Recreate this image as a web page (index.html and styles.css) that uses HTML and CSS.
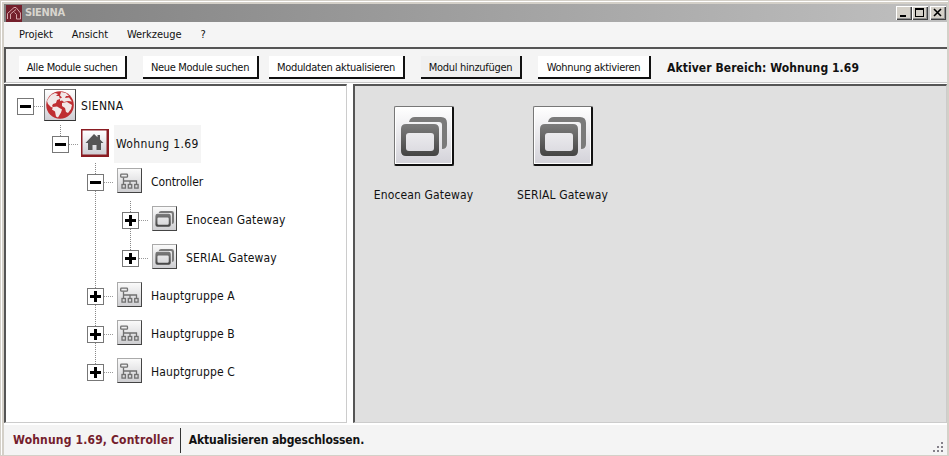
FILE: index.html
```html
<!DOCTYPE html>
<html lang="de">
<head>
<meta charset="utf-8">
<title>SIENNA</title>
<link rel="stylesheet" href="styles.css">
</head>
<body>
<svg class="defs" aria-hidden="true">
  <defs>
    <linearGradient id="tile" x1="0" y1="0" x2="0" y2="1"><stop offset="0" stop-color="#fff"/><stop offset="1" stop-color="#cfced4"/></linearGradient>
    <linearGradient id="ink" x1="0" y1="0" x2="0" y2="1"><stop offset="0" stop-color="#7c7c7c"/><stop offset="1" stop-color="#444"/></linearGradient>
    <symbol id="group" viewBox="0 0 23 23">
      <g fill="none" stroke="#707070" stroke-width="1.300">
        <rect x="2.700" y="5.200" width="6.800" height="3" rx=".8"/>
        <path d="M6 8.500V12h13.500M6 11.500v4M12.500 11.500v4M19 11.500v4" transform="translate(-.5)"/>
        <rect x="4" y="15.500" width="3.400" height="3.600"/><rect x="10.300" y="15.500" width="3.400" height="3.600"/><rect x="16.700" y="15.500" width="3.400" height="3.600"/>
      </g>
    </symbol>
    <symbol id="gateway" viewBox="0 0 57 57">
      <path fill="#7a7a7a" d="M14 15q1-5 6-5h26q6 0 6 6v21q0 5-5 5V18q0-3-3-3z"/>
      <path fill="url(#ink)" fill-rule="evenodd" d="M11 17h28q5 0 5 5v22q0 5-5 5H11q-5 0-5-5V22q0-5 5-5zM14 26q-3 0-3 3v12q0 3 3 3h22q3 0 3-3V29q0-3-3-3z"/>
    </symbol>
  </defs>
</svg>
<div class="window">
  <header class="titlebar">
    <svg class="logo" viewBox="0 0 16 17"><rect width="16" height="17" fill="#74202c"/><path d="M1.500 14V8.500L8 2.500h2L14.500 8v6H10.500V9.500L8.500 7.500M4.500 14V9L10 4.500" fill="none" stroke="#dfb4b8" stroke-width=".9"/></svg>
    <span class="title">SIENNA</span>
    <span class="ctl"><svg viewBox="0 0 16 14"><path d="M4 9h6v2H4z"/></svg></span>
    <span class="ctl"><svg viewBox="0 0 16 14"><path fill-rule="evenodd" d="M3 2h9v9H3zM4 4v6h7V4z"/></svg></span>
    <span class="ctl close"><svg viewBox="0 0 16 14"><path d="M4 3l7 7M11 3l-7 7" stroke="#000" stroke-width="1.600"/></svg></span>
  </header>
  <nav class="menu"><span>Projekt</span><span>Ansicht</span><span>Werkzeuge</span><span>?</span></nav>
  <div class="toolbar">
    <button class="b1">Alle Module suchen</button>
    <button class="b2">Neue Module suchen</button>
    <button class="b3">Moduldaten aktualisieren</button>
    <button class="b4">Modul hinzufügen</button>
    <button class="b5">Wohnung aktivieren</button>
    <strong>Aktiver Bereich: Wohnung 1.69</strong>
  </div>
  <main class="content">
    <section class="tree">
      <div class="row"><i class="cell"><b class="box"></b></i>
        <span class="slot"><svg class="globe" viewBox="0 0 30 30"><rect width="30" height="30" fill="url(#tile)"/><circle cx="15" cy="15" r="13.800" fill="#bf2e32"/><path fill="#f1e8e8" d="M3 9L6 5l4-2 3 1-2 2 3 0 1 3-3 1-1 3-3 1-1 2 2 2-3-1-3-3-1-3zM8 17l4-.5 5 3-1 3-3 5-2-1-1-5-3-2zM16 2l5 1 3 3-3 0-1 2 4-.5 3 4-4-.5-4 1-2-1.500-2 .5 0-2.500 2-1-2-2zM17 13l5-1 5 3-1 4-3 4-2-1-1-4-3-2z"/></svg></span><span class="label l0">SIENNA</span></div>
      <div class="row"><i class="cell blank"></i><i class="cell last"><b class="box"></b></i>
        <span class="slot"><svg class="home" viewBox="0 0 28 28"><rect width="28" height="28" fill="#8a1c22"/><rect x="1.500" y="1.500" width="24" height="24" fill="url(#tile)"/><path fill="#555" d="M13 5l3.500 3.200V6h2.500v4.500L22.500 14H20v7h-4.500v-5h-4v5H7v-7H4.500z"/></svg></span><span class="label selected">Wohnung 1.69</span></div>
      <div class="row"><i class="cell blank"></i><i class="cell blank"></i><i class="cell mid"><b class="box"></b></i>
        <span class="slot"><svg class="small"><use href="#group"/></svg></span><span class="label l2">Controller</span></div>
      <div class="row"><i class="cell blank"></i><i class="cell blank"></i><i class="cell line"></i><i class="cell mid"><b class="box plus"></b></i>
        <span class="slot"><svg class="small"><use href="#gateway"/></svg></span><span class="label">Enocean Gateway</span></div>
      <div class="row"><i class="cell blank"></i><i class="cell blank"></i><i class="cell line"></i><i class="cell last"><b class="box plus"></b></i>
        <span class="slot"><svg class="small"><use href="#gateway"/></svg></span><span class="label">SERIAL Gateway</span></div>
      <div class="row"><i class="cell blank"></i><i class="cell blank"></i><i class="cell mid"><b class="box plus"></b></i>
        <span class="slot"><svg class="small"><use href="#group"/></svg></span><span class="label">Hauptgruppe A</span></div>
      <div class="row"><i class="cell blank"></i><i class="cell blank"></i><i class="cell mid"><b class="box plus"></b></i>
        <span class="slot"><svg class="small"><use href="#group"/></svg></span><span class="label">Hauptgruppe B</span></div>
      <div class="row"><i class="cell blank"></i><i class="cell blank"></i><i class="cell last"><b class="box plus"></b></i>
        <span class="slot"><svg class="small"><use href="#group"/></svg></span><span class="label">Hauptgruppe C</span></div>
    </section>
    <section class="modules">
      <figure><svg class="big"><use href="#gateway"/></svg><figcaption>Enocean Gateway</figcaption></figure>
      <figure><svg class="big"><use href="#gateway"/></svg><figcaption>SERIAL Gateway</figcaption></figure>
    </section>
  </main>
  <footer class="status">
    <strong class="where">Wohnung 1.69, Controller</strong>
    <strong class="message">Aktualisieren abgeschlossen.</strong>
    <svg class="grip" viewBox="0 0 12 12"><path fill="#85818a" d="M8 0h2v2H8zM4 4h2v2H4zM8 4h2v2H8zM0 8h2v2H0zM4 8h2v2H4zM8 8h2v2H8z"/></svg>
  </footer>
</div>
</body>
</html>
```
FILE: styles.css
```css
* { box-sizing: border-box; }
body {
  margin: 0;
  width: 949px;
  height: 456px;
  overflow: hidden;
  background: #d4d0c8;
  color: #111;
  font: 12px/14px "DejaVu Sans Condensed", "DejaVu Sans", sans-serif;
  font-stretch: condensed;
}
.defs { position: absolute; width: 0; height: 0; }
svg { display: block; }
.window {
  width: 949px;
  height: 456px;
  padding: 3px 1px 2px 3px;
  border: 1px solid #d4d0c8;
  box-shadow: inset 1px 1px #fff;
  display: flex;
  flex-direction: column;
  white-space: nowrap;
}
.titlebar {
  height: 18px;
  display: flex;
  align-items: center;
  background: linear-gradient(90deg, #808080, #c0c0c0);
  padding: 0 1px 0 2px;
  flex: none;
}
.logo { width: 16px; height: 17px; margin-right: 3px; }
.title { flex: 1; color: #d8d5ce; font-weight: bold; font-size: 11px; letter-spacing: -.35px; }
.ctl {
  width: 16px;
  height: 14px;
  background: #d4d0c8;
  box-shadow: inset 1px 1px #fff, inset -1px -1px #404040, inset -2px -2px #909090;
}
.close { margin-left: 2px; }
.menu { height: 25px; background: #f5f5f5; display: flex; align-items: center; padding-left: 15px; gap: 19px; flex: none; font-size: 11px; letter-spacing: -.05px; }
.toolbar {
  height: 36px;
  flex: none;
  display: flex;
  align-items: flex-start;
  background: #f4f4f4;
  border-top: 2px solid #555;
  border-left: 2px solid #555;
  border-bottom: 1px solid #c8c8c8;
  padding: 7px 0 0 13px;
}
button {
  height: 23px;
  padding: 0;
  margin: 0 16px 0 0;
  border: solid #111;
  border-width: 0 2px 2px 0;
  background: #fff;
  color: #111;
  font: 11px/23px "DejaVu Sans Condensed", sans-serif;
  font-stretch: condensed;
  letter-spacing: -.3px;
  text-align: center;
}
.b1 { width: 108px; }
.b2 { width: 116px; margin-right: 10px; }
.b3 { width: 136px; }
.b4 { width: 101px; background: #f0f0f0; }
.b5 { width: 113px; }
.toolbar strong { margin-top: 5px; letter-spacing: .08px; }
.content { height: 342px; flex: none; display: flex; background: #fff; padding: 1px 0 2px; }
.tree {
  width: 343px;
  margin-right: 6px;
  border: solid #555;
  border-width: 2px 0 0 2px;
  border-right: 1px solid #ccc;
  border-bottom: 1px solid #ccc;
  background: #fff;
  padding: 1px 0 0 2px;
}
.row { display: flex; height: 38px; }
.cell {
  --v: repeating-linear-gradient(180deg, #888 0 1px, transparent 1px 2px);
  --h: repeating-linear-gradient(90deg, #999 0 1px, transparent 1px 2px);
  display: block;
  width: 35px;
  height: 38px;
  padding: 11px 0 0 9px;
  background: var(--h) 26px 19px / 9px 1px no-repeat;
}
.blank { background: none; }
.line { background: var(--v) 17px 0 / 1px 38px no-repeat; }
.last { background: var(--h) 26px 19px / 9px 1px no-repeat, var(--v) 17px 0 / 1px 12px no-repeat; }
.mid { background: var(--h) 26px 19px / 9px 1px no-repeat, var(--v) 17px 0 / 1px 38px no-repeat; }
.box { display: block; width: 17px; height: 17px; border: 1px solid #777; background: linear-gradient(#000, #000) center / 11px 3px no-repeat #fff; }
.plus { background: linear-gradient(#000, #000) center / 11px 3px no-repeat, linear-gradient(#000, #000) center / 3px 11px no-repeat #fff; }
.slot { width: 36px; flex: none; }
.globe { width: 32px; height: 32px; margin: 2px 0 0 1px; border: 1px solid #777; border-right-color: #444; border-bottom-color: #333; }
.home { width: 28px; height: 28px; margin: 4px 0 0 3px; }
.small { width: 25px; height: 25px; margin: 5px 0 0 4px; background: linear-gradient(#fafafa, #cfcfd2); border: 1px solid #aaa; border-right-color: #444; border-bottom-color: #444; }
.label { height: 38px; line-height: 38px; padding: 0 2px; letter-spacing: .14px; }
.l0 { letter-spacing: .35px; }
.l2 { letter-spacing: -.1px; }
.selected { background: #f4f4f4; width: 87px; letter-spacing: .38px; }
.modules {
  flex: 1;
  display: flex;
  background: #e0e0e0;
  border: 2px solid #555;
  border-right: 1px solid #ccc;
  border-bottom: 1px solid #ccc;
  padding: 20px 0 0;
}
figure { margin: 0; width: 139px; display: flex; flex-direction: column; align-items: center; }
.big {
  width: 60px;
  height: 60px;
  margin-right: 1px;
  border: 1px solid #777;
  border-right: 2px solid #111;
  border-bottom: 2px solid #111;
  border-radius: 2px;
  background: linear-gradient(#fff, #d3d2d9);
  box-shadow: inset 0 0 0 1px #fff;
}
figcaption { margin: 22px 2px 0 0; letter-spacing: .14px; }
.status { height: 30px; flex: none; background: #f4f4f4; display: flex; align-items: center; padding: 0 2px 0 9px; }
.where { color: #74202c; padding-right: 6px; border-right: 1px solid #333; height: 25px; line-height: 25px; letter-spacing: .17px; }
.message { padding-left: 8px; flex: 1; letter-spacing: -.1px; }
.grip { width: 12px; height: 12px; align-self: flex-end; margin-bottom: 1px; }
```
